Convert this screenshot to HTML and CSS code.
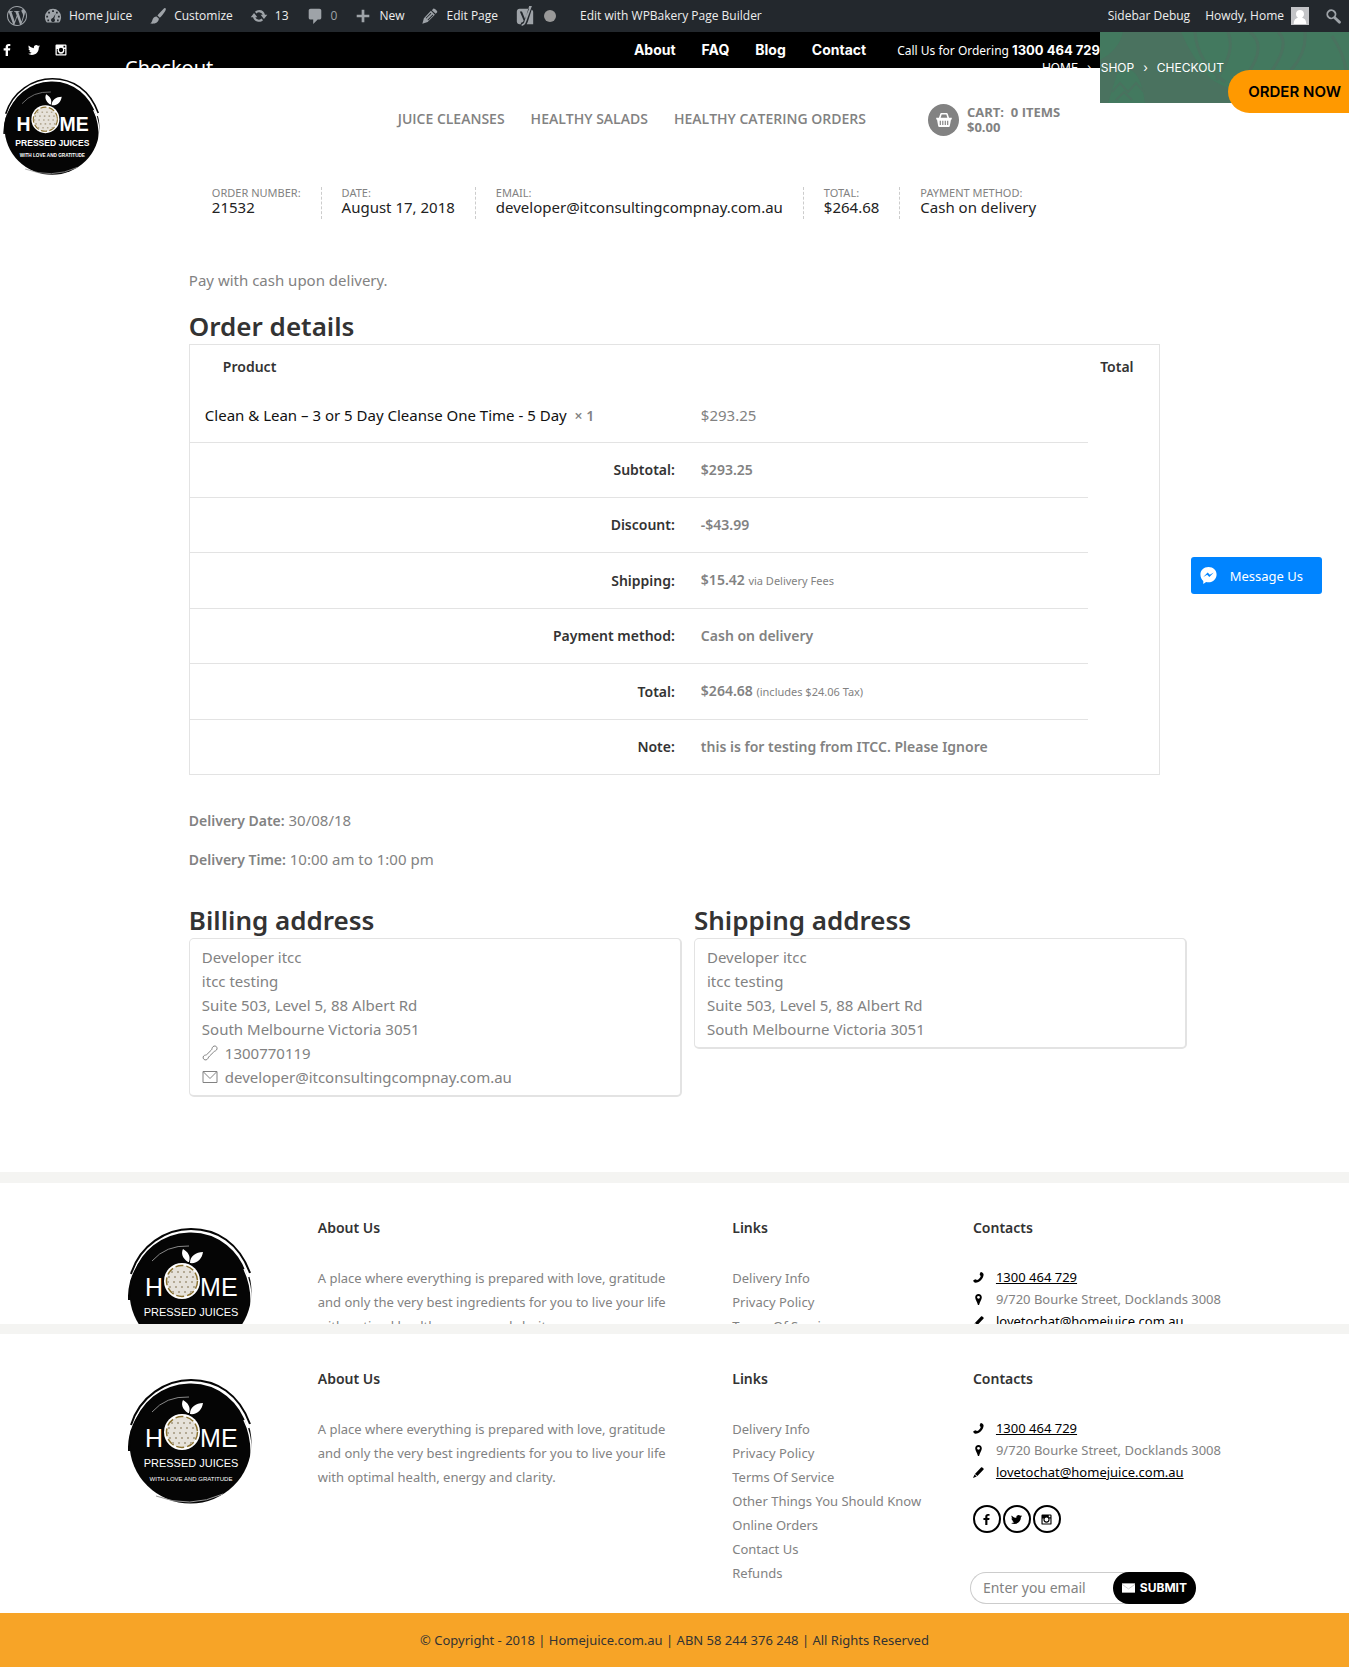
FILE: index.html
```html
<!DOCTYPE html>
<html lang="en">
<head>
<meta charset="utf-8">
<title>Checkout – Home Juice</title>
<link rel="stylesheet" href="styles.css">
</head>
<body>
<svg class="sprite" aria-hidden="true">
  <symbol id="i-wp" viewBox="0 0 24 24"><path d="M21.469 6.825c.84 1.537 1.318 3.3 1.318 5.175 0 3.979-2.156 7.456-5.363 9.325l3.295-9.527c.615-1.54.82-2.771.82-3.864 0-.405-.026-.78-.07-1.11m-7.981.105c.647-.03 1.232-.105 1.232-.105.582-.075.514-.93-.067-.899 0 0-1.755.135-2.88.135-1.064 0-2.85-.15-2.85-.15-.585-.03-.661.855-.075.885 0 0 .54.061 1.125.09l1.68 4.605-2.37 7.08L5.354 6.9c.649-.03 1.234-.1 1.234-.1.585-.075.516-.93-.065-.896 0 0-1.746.138-2.874.138-.2 0-.438-.008-.69-.015C4.911 3.15 8.235 1.215 12 1.215c2.809 0 5.365 1.072 7.286 2.833-.046-.003-.091-.009-.141-.009-1.06 0-1.812.923-1.812 1.914 0 .89.513 1.643 1.06 2.531.411.72.89 1.643.89 2.977 0 .915-.354 1.994-.821 3.479l-1.075 3.585-3.9-11.61.001.014zM12 22.784c-1.059 0-2.081-.153-3.048-.437l3.237-9.406 3.315 9.087c.024.053.05.101.078.149-1.12.393-2.325.609-3.582.609M1.211 12c0-1.564.336-3.05.935-4.39L7.29 21.709C3.694 19.96 1.212 16.271 1.211 12M12 0C5.385 0 0 5.385 0 12s5.385 12 12 12 12-5.385 12-12S18.615 0 12 0"/></symbol>
  <symbol id="i-dash" viewBox="0 0 20 20"><path fill-rule="evenodd" d="M10 2a9 9 0 0 0-9 9c0 2.500.8 4.600 2.200 6.200h13.600C18.200 15.600 19 13.500 19 11a9 9 0 0 0-9-9zM9 3.500h2v2H9zM4.600 5.300h2v2h-2zM13.300 5.300h2v2h-2zM2.500 9.800h2v2h-2zM15.500 9.800h2v2h-2zM12.900 7.600l-1.500 5.200a2.200 2.200 0 1 1-1.500-.5zM3.800 14h1.800v1.800H3.800zM14.500 14h1.800v1.800h-1.800z"/></symbol>
  <symbol id="i-brush" viewBox="0 0 20 20"><path d="M18.300 1.300c1 .9.200 2.400-.8 3.900-1.700 2.400-4 5.500-5.500 6.700l-2.600-2.400C10.700 7.600 14.300 3.700 16 2.100c.8-.8 1.700-1.300 2.300-.8zM8.400 10.600l2.500 2.300c.2 1.400-.5 3.200-2.200 4.300-2 1.300-4.800 1.500-7.300 1.100 1.500-1 1.800-1.900 2.300-3.600.6-2.300 2.300-4.100 4.700-4.100z"/></symbol>
  <symbol id="i-update" viewBox="0 0 20 20"><path d="M10.200 3.300a6.700 6.700 0 0 1 6.400 5.300h2.600l-3.700 4.600-3.700-4.600h2.300a4.300 4.300 0 0 0-7-1.500L5.500 5.300a6.700 6.700 0 0 1 4.700-2zM4.500 6.800l3.700 4.600H5.900a4.300 4.300 0 0 0 7 1.500l1.600 1.800A6.700 6.700 0 0 1 3.400 11.400H.8z"/></symbol>
  <symbol id="i-comment" viewBox="0 0 20 20"><path d="M5 2h10c1.100 0 2 .9 2 2v8c0 1.100-.9 2-2 2h-2l-5 5v-5H5c-1.100 0-2-.9-2-2V4c0-1.100.9-2 2-2z"/></symbol>
  <symbol id="i-plus" viewBox="0 0 20 20"><path d="M17 8.500v3h-5.500V17h-3v-5.500H3v-3h5.500V3h3v5.500z"/></symbol>
  <symbol id="i-pen" viewBox="0 0 20 20"><path fill-rule="evenodd" d="M13.900 1.700c.9-.9 5 3 4.100 4l-1.700 1.700-4.200-3.900zM11 4.300l4.400 4.300-8 8.200L1.500 18.500l1.700-6zM10.800 6.400l-5.600 5.900.6.600 5.700-5.800zM12.900 8.400l-5.700 5.800.7.700 5.800-5.700z"/></symbol>
  <symbol id="i-yoast" viewBox="0 0 20 22"><path fill-rule="evenodd" d="M4 3h10.500L9.900 13.900 6.700 6H4.300l4.200 10c-.5 1.500-1.200 2.200-3 2.300V20H4c-1.700 0-3-1.300-3-3V6c0-1.700 1.300-3 3-3zM14.600 0h3l-6.300 17c-1.200 3.200-2.700 4.700-5 4.900v-1.900c2-.5 2.700-1.600 3.100-3zM17.300 4c1.100.4 1.700 1.400 1.700 2.500V20h-7.200c.6-1.100 1.100-2.200 1.500-3.300z"/></symbol>
  <symbol id="i-search" viewBox="0 0 20 20"><path fill-rule="evenodd" d="M12.100 4.200a5.500 5.500 0 0 0-7.900 7.700 5.500 5.500 0 0 0 6.400 1l5.200 5c.8.8 1.900.8 2.500.1.700-.7.600-1.700-.1-2.400l-5.200-4.900a5.500 5.500 0 0 0-.9-6.500zM10.700 5.700a3.500 3.500 0 1 1-5 4.900 3.500 3.500 0 0 1 5-4.900z"/></symbol>
  <symbol id="i-fb" viewBox="0 0 24 24"><path d="M14 24V13h4l.6-4.500H14V6c0-1.300.4-2.200 2.200-2.200h2.400V.2C18.200.1 16.800 0 15.200 0 11.700 0 9.300 2.100 9.300 6v2.500h-4V13h4v11z"/></symbol>
  <symbol id="i-tw" viewBox="0 0 24 24"><path d="M23.954 4.569c-.885.389-1.83.654-2.825.775 1.014-.611 1.794-1.574 2.163-2.723-.951.555-2.005.959-3.127 1.184-.896-.959-2.173-1.559-3.591-1.559-2.717 0-4.92 2.203-4.92 4.917 0 .39.045.765.127 1.124C7.691 8.094 4.066 6.13 1.64 3.161c-.427.722-.666 1.561-.666 2.475 0 1.71.87 3.213 2.188 4.096-.807-.026-1.566-.248-2.228-.616v.061c0 2.385 1.693 4.374 3.946 4.827-.413.111-.849.171-1.296.171-.314 0-.615-.03-.916-.086.631 1.953 2.445 3.377 4.604 3.417-1.68 1.319-3.809 2.105-6.102 2.105-.39 0-.779-.023-1.17-.067 2.189 1.394 4.768 2.209 7.557 2.209 9.054 0 13.999-7.496 13.999-13.986 0-.209 0-.42-.015-.63.961-.689 1.8-1.56 2.46-2.548z"/></symbol>
  <symbol id="i-ig" viewBox="0 0 24 24"><path fill-rule="evenodd" d="M3 1h18a2 2 0 0 1 2 2v18a2 2 0 0 1-2 2H3a2 2 0 0 1-2-2V3a2 2 0 0 1 2-2zM3.500 10v10.500h17V10h-2.200a6.800 6.800 0 1 1-12.600 0zM12 7.700a4.300 4.300 0 1 0 0 8.600 4.300 4.300 0 0 0 0-8.600zM17 3.500V7h3.500V3.500z"/></symbol>
  <symbol id="i-basket" viewBox="0 0 20 18"><path fill-rule="evenodd" d="M5 1.500C5.300.6 5.900 0 7 0h6c1.100 0 1.700.6 2 1.500L16.500 6H20v2.500h-1L17.600 16c-.2 1.200-.9 2-2 2H4.400c-1.100 0-1.800-.8-2-2L1 8.500H0V6h3.500zM7 2L5.700 6h8.600L13 2zM4.500 10v5.500H6V10zM7.700 10v5.500h1.500V10zM10.900 10v5.500h1.500V10zM14 10v5.500h1.500V10z"/></symbol>
  <symbol id="i-tel" viewBox="0 0 20 20"><path d="M14 0c3 .5 5.500 2.500 5.300 5C18.500 12.500 12 19 4.500 19.500 2.500 19.500.5 17.500.3 15.500L4 13l3.500 1.500c3-1.500 5.500-4 6.500-7L12 4z"/></symbol>
  <symbol id="i-pin" viewBox="0 0 20 20"><path fill-rule="evenodd" d="M10 0c3.700 0 6 2.600 6 6.200 0 4-3.500 7.300-5 13.800H9C7.500 13.500 4 10.200 4 6.200 4 2.600 6.300 0 10 0zm0 3.500a2.600 2.600 0 1 0 0 5.200 2.600 2.600 0 0 0 0-5.200z"/></symbol>
  <symbol id="i-pencil" viewBox="0 0 20 20"><path d="M15 .5c1.200-1.200 5.500 2.300 4.300 4L8 16.500 3.500 12.500zM2.800 13.500l4 3.700L0 20z"/></symbol>
  <symbol id="logo" viewBox="0 0 125 126">
    <ellipse cx="62.500" cy="64" rx="61" ry="60.500" fill="#050505"/>
    <path d="M3 50C10 22 33 4 61 3c30-1 53 20 60 46" fill="none" stroke="#fff" stroke-width="3"/>
    <path d="M3 46C12 17 38 1 63 1c26 0 48 14 59 44M1 72C0 40 25 9 62 6" fill="none" stroke="#050505" stroke-width="2"/>
    <path d="M116 41c6 12 8 24 7 39" fill="none" stroke="#fff" stroke-width="1.500"/>
    <path d="M24 33Q38 17 61 18" fill="none" stroke="#888" stroke-width="1"/>
    <path d="M28 117q34 13 67-2" fill="none" stroke="#999" stroke-width="1"/>
    <path d="M60 34c-6-4-7-9-5-13 5 3 8 7 6 13zM62 35c0-7 6-11 13-11-1 7-6 12-13 11z" fill="#fff"/>
    <circle cx="54" cy="53" r="18" fill="#fff"/>
    <circle cx="54" cy="53" r="15.500" fill="#e6e2da" stroke="#8b7230" stroke-width="1.500" stroke-dasharray="8 3"/>
    <g fill="none" stroke="#b3a994" stroke-width="2" stroke-dasharray="2 4">
      <path d="M43 44h24M40 49h29M39 54h30M41 59h28M44 64h22"/>
    </g>
    <g fill="#fff" font-family="'Liberation Sans', sans-serif">
      <text x="17" y="68" font-size="25">H</text>
      <text x="72" y="68" font-size="25">M</text>
      <text x="93" y="68" font-size="25">E</text>
      <text x="63" y="88" font-size="11" text-anchor="middle">PRESSED JUICES</text>
      <text x="63" y="102" font-size="6" text-anchor="middle">WITH LOVE AND GRATITUDE</text>
    </g>
  </symbol>
</svg>

<nav class="adminbar" aria-label="Toolbar">
  <a class="ab-item ab-logo" href="#" aria-label="About WordPress"><svg class="ic20"><use href="#i-wp"/></svg></a>
  <a class="ab-item" href="#"><svg class="ic18"><use href="#i-dash"/></svg>Home Juice</a>
  <a class="ab-item" href="#"><svg class="ic18"><use href="#i-brush"/></svg>Customize</a>
  <a class="ab-item" href="#"><svg class="ic18"><use href="#i-update"/></svg>13</a>
  <a class="ab-item ab-dim" href="#"><svg class="ic18"><use href="#i-comment"/></svg>0</a>
  <a class="ab-item" href="#"><svg class="ic18"><use href="#i-plus"/></svg>New</a>
  <a class="ab-item" href="#"><svg class="ic18"><use href="#i-pen"/></svg>Edit Page</a>
  <a class="ab-item ab-seo" href="#" aria-label="SEO"><svg class="ic20"><use href="#i-yoast"/></svg><span class="dot"></span></a>
  <a class="ab-item" href="#">Edit with WPBakery Page Builder</a>
  <div class="ab-right">
    <a class="ab-item" href="#">Sidebar Debug</a>
    <a class="ab-item" href="#">Howdy, Home<svg class="avatar" viewBox="0 0 18 18"><path fill="#c3c4c7" d="M0 0h18v18H0z"/><path fill="#fff" d="M9 3c2.200 0 4 1.600 4 4 0 1.800-.8 3-2 3.700 2.600.6 4.200 2.300 4.300 6.300H2.700c.1-4 1.700-5.700 4.300-6.300C5.800 10 5 8.800 5 7c0-2.400 1.800-4 4-4z"/></svg></a>
    <a class="ab-item" href="#" aria-label="Search"><svg class="ic18"><use href="#i-search"/></svg></a>
  </div>
</nav>

<header class="masthead">
  <svg class="banner" viewBox="0 0 249 71" preserveAspectRatio="xMaxYMin slice" aria-hidden="true">
    <path fill="#4a725f" d="M0 0h249v71H0z"/>
    <g fill="#43795f"><path d="M0 0h23q-4 18-23 28zM81 0h168v71h-68q-50-10-70-24Q92 26 81 0zM17 42q22-16 28 29H8z"/></g>
    <g fill="none" stroke="#4a725f" stroke-width="3">
      <path d="M95 0q2 30 30 50M128 0q8 20-12 48M150 0q18 14-4 44M178 0q14 12-10 44M205 0q2 20-14 38M232 4q12 18 14 34"/></g>
    <path fill="none" stroke="#4a725f" stroke-width="2" d="M12 60l8-9 8 9 8-9 8 9M16 68l8-8 8 8"/>
  </svg>
  <div class="topbar">
    <div class="topbar-social">
      <a href="#" aria-label="Facebook"><svg><use href="#i-fb"/></svg></a>
      <a href="#" aria-label="Twitter"><svg><use href="#i-tw"/></svg></a>
      <a href="#" aria-label="Instagram"><svg><use href="#i-ig"/></svg></a>
    </div>
    <nav class="topbar-links"><a href="#">About</a><a href="#">FAQ</a><a href="#">Blog</a><a href="#">Contact</a></nav>
    <div class="topbar-call">Call Us for Ordering <strong>1300 464 729</strong></div>
  </div>
  <div class="page-head">
    <h1>Checkout</h1>
    <nav class="crumbs"><a href="#">HOME</a><span>›</span><a href="#">SHOP</a><span>›</span><span>CHECKOUT</span></nav>
  </div>
  <div class="mainbar">
    <a class="brand" href="#" aria-label="Home Pressed Juices"><svg><use href="#logo"/></svg></a>
    <nav class="menu"><a href="#">JUICE CLEANSES</a><a href="#">HEALTHY SALADS</a><a href="#">HEALTHY CATERING ORDERS</a></nav>
    <a class="cart" href="#">
      <span class="cart-icon"><svg><use href="#i-basket"/></svg></span>
      <span>CART:&nbsp; 0 ITEMS<br>$0.00</span>
    </a>
  </div>
</header>

<a class="order-now" href="#">ORDER NOW</a>
<button class="message-us" type="button"><svg viewBox="0 0 20 20"><path fill="#fff" d="M10 1c5 0 8.500 3.500 8.500 8s-3.500 8.200-8.500 8.200c-.9 0-1.700-.1-2.500-.3L4.500 19v-3.300C2.700 14.200 1.500 11.800 1.500 9 1.500 4.500 5 1 10 1z"/><path fill="#0084ff" d="M4.500 11.500l4.600-4.700 2.300 2.300 4.100-2.300-4.600 4.800-2.300-2.400z"/></svg>Message Us</button>

<main class="content">
  <ul class="overview">
    <li>ORDER NUMBER:<strong>21532</strong></li>
    <li>DATE:<strong>August 17, 2018</strong></li>
    <li>EMAIL:<strong>developer@itconsultingcompnay.com.au</strong></li>
    <li>TOTAL:<strong>$264.68</strong></li>
    <li>PAYMENT METHOD:<strong>Cash on delivery</strong></li>
  </ul>
  <p class="pay-note">Pay with cash upon delivery.</p>

  <section>
    <h2>Order details</h2>
    <table class="order">
      <colgroup><col class="col-name"><col><col class="col-side"></colgroup>
      <thead><tr><th colspan="2" class="th-product">Product</th><th>Total</th></tr></thead>
      <tbody>
        <tr class="line-item"><td><a href="#">Clean &amp; Lean – 3 or 5 Day Cleanse One Time - 5 Day</a>&nbsp; <strong>× 1</strong></td><td>$293.25</td></tr>
      </tbody>
      <tfoot>
        <tr><th scope="row">Subtotal:</th><td>$293.25</td></tr>
        <tr><th scope="row">Discount:</th><td>-$43.99</td></tr>
        <tr><th scope="row">Shipping:</th><td>$15.42 <small>via Delivery Fees</small></td></tr>
        <tr><th scope="row">Payment method:</th><td>Cash on delivery</td></tr>
        <tr><th scope="row">Total:</th><td>$264.68 <small>(includes $24.06 Tax)</small></td></tr>
        <tr><th scope="row">Note:</th><td>this is for testing from ITCC. Please Ignore</td></tr>
      </tfoot>
    </table>
  </section>

  <p class="delivery"><strong>Delivery Date:</strong> 30/08/18</p>
  <p class="delivery"><strong>Delivery Time:</strong> 10:00 am to 1:00 pm</p>

  <section class="addresses">
    <div>
      <h2>Billing address</h2>
      <address>Developer itcc<br>itcc testing<br>Suite 503, Level 5, 88 Albert Rd<br>South Melbourne Victoria 3051
        <span class="addr-line"><svg viewBox="0 0 16 16"><path d="M10.200 2.800C11 1 13 .4 14.300 1.600c1.300 1.300.9 3.400-.8 4.200-1 .5-1.500.7-2.200 1.600L7.600 11c-.9.800-1.200 1.300-1.600 2.300-.8 1.700-2.900 2.200-4.200.9-1.300-1.300-.7-3.300.8-3.900.9-.4 1.300 0 2.200-.8L9.400 5c.8-.8.4-1.300.8-2.200z"/></svg>1300770119</span>
        <span class="addr-line"><svg viewBox="0 0 16 16"><path d="M1 2.500h14v11H1zM1.500 3L8 9.500 14.500 3"/></svg>developer@itconsultingcompnay.com.au</span>
      </address>
    </div>
    <div>
      <h2>Shipping address</h2>
      <address>Developer itcc<br>itcc testing<br>Suite 503, Level 5, 88 Albert Rd<br>South Melbourne Victoria 3051</address>
    </div>
  </section>
</main>

<footer class="footer footer-peek">
  <div class="footer-logo"><svg><use href="#logo"/></svg></div>
  <section><h3>About Us</h3><p>A place where everything is prepared with love, gratitude and only the very best ingredients for you to live your life with optimal health, energy and clarity.</p></section>
  <section><h3>Links</h3><ul><li><a href="#">Delivery Info</a></li><li><a href="#">Privacy Policy</a></li><li><a href="#">Terms Of Service</a></li></ul></section>
  <section><h3>Contacts</h3>
    <ul class="contacts">
      <li><svg><use href="#i-tel"/></svg><a href="#">1300 464 729</a></li>
      <li><svg><use href="#i-pin"/></svg>9/720 Bourke Street, Docklands 3008</li>
      <li><svg><use href="#i-pencil"/></svg><a href="#">lovetochat@homejuice.com.au</a></li>
    </ul>
  </section>
</footer>

<footer class="footer">
  <div class="footer-logo"><svg><use href="#logo"/></svg></div>
  <section><h3>About Us</h3><p>A place where everything is prepared with love, gratitude and only the very best ingredients for you to live your life with optimal health, energy and clarity.</p></section>
  <section><h3>Links</h3>
    <ul>
      <li><a href="#">Delivery Info</a></li><li><a href="#">Privacy Policy</a></li><li><a href="#">Terms Of Service</a></li>
      <li><a href="#">Other Things You Should Know</a></li><li><a href="#">Online Orders</a></li><li><a href="#">Contact Us</a></li><li><a href="#">Refunds</a></li>
    </ul>
  </section>
  <section><h3>Contacts</h3>
    <ul class="contacts">
      <li><svg><use href="#i-tel"/></svg><a href="#">1300 464 729</a></li>
      <li><svg><use href="#i-pin"/></svg>9/720 Bourke Street, Docklands 3008</li>
      <li><svg><use href="#i-pencil"/></svg><a href="#">lovetochat@homejuice.com.au</a></li>
    </ul>
    <div class="social">
      <a href="#" aria-label="Facebook"><svg><use href="#i-fb"/></svg></a>
      <a href="#" aria-label="Twitter"><svg><use href="#i-tw"/></svg></a>
      <a href="#" aria-label="Instagram"><svg><use href="#i-ig"/></svg></a>
    </div>
    <form class="signup">
      <input type="email" placeholder="Enter you email" aria-label="Email">
      <button type="button"><svg viewBox="0 0 14 10"><path fill="#fff" d="M0 0h14v10H0z"/><path fill="none" stroke="#ccc" d="M0 1l7 5 7-5"/></svg>SUBMIT</button>
    </form>
  </section>
</footer>

<div class="copyright">© Copyright - 2018 | Homejuice.com.au | ABN 58 244 376 248 | All Rights Reserved</div>
</body>
</html>
```
FILE: styles.css
```css
* { box-sizing: border-box; }
body { margin: 0; background: #fff; color: #828282; font: 15px/24px "Noto Sans", sans-serif; }
a { color: inherit; text-decoration: none; }
h1, h2, h3, p, ul { margin: 0; padding: 0; }
ul { list-style: none; }
strong { font-size: 14px; line-height: 14px; font-weight: 600; }
svg { display: block; fill: currentColor; flex: none; }
.sprite { display: none; }

/* Admin toolbar */
.adminbar { display: flex; height: 32px; align-items: center; background: #23282d; color: #eee; font: 12px/32px "Open Sans", sans-serif; padding: 0 7px; white-space: nowrap; }
.ab-item { display: flex; align-items: center; gap: 7px; margin-right: 17px; }
.ab-item svg { color: #9ea3a8; }
.ab-dim { color: #9ea3a8; }
.ab-seo { gap: 9px; margin-right: 24px; }
.ab-seo .dot { width: 12px; height: 12px; border-radius: 50%; background: #999; }
.ab-right { display: flex; margin-left: auto; }
.ab-right .ab-item { margin-right: 15px; }
.ab-right .ab-item:last-child { margin-right: 0; }
.ic20 { width: 20px; height: 20px; }
.ic18 { width: 18px; height: 18px; }
.avatar { width: 18px; height: 18px; }

/* Site header: banner, black strip, page title and white bar share one grid */
.masthead { display: grid; grid-template: 36px 35px 84px / minmax(0, 1100px) minmax(0, 1fr); }
.banner { grid-area: 1 / 2 / 3 / 3; width: 100%; height: 100%; }
.topbar { grid-area: 1 / 1; display: flex; align-items: center; background: #000; color: #fff; white-space: nowrap; }
.topbar-social { display: flex; gap: 15px; padding-left: 1px; }
.topbar-social svg { width: 12px; height: 12px; }
.topbar-links { display: flex; gap: 26px; margin-left: auto; font: bold 14px/36px Inter, sans-serif; }
.topbar-call { margin-left: 31px; font-size: 12px; }
.topbar-call strong { font: bold 13px/24px Inter, sans-serif; }
.page-head { grid-area: 1 / 1 / 3 / 3; z-index: 1; display: flex; justify-content: space-between; align-items: center; padding: 0 125px; color: #fff; }
.page-head h1 { font-size: 20px; font-weight: 400; }
.crumbs { display: flex; gap: 9px; font: 12px/20px Inter, sans-serif; }
.mainbar { grid-area: 2 / 1 / 4 / 2; z-index: 2; display: flex; align-items: flex-start; background: #fff; padding-left: 3px; font: 600 14px/15px "Open Sans", sans-serif; white-space: nowrap; }
.brand svg { width: 98px; height: 98px; margin-top: 10px; }
.menu { display: flex; gap: 26px; margin: 43px 0 0 auto; }
.cart { display: flex; flex: 0 0 136px; align-items: center; gap: 8px; margin: 36px 36px 0 62px; font-size: 13px; font-weight: 700; }
.cart-icon { display: grid; flex: none; place-items: center; width: 31px; height: 32px; border-radius: 50%; background: #828282; color: #fff; }
.cart-icon svg { width: 16px; height: 14px; }

.order-now { position: fixed; right: 0; top: 70px; z-index: 3; padding: 0 8px 0 20px; border-radius: 22px 0 0 22px; background: #ff9900; color: #000; font: 600 15px/43px Inter, sans-serif; }
.message-us { position: fixed; right: 27px; top: 557px; z-index: 3; display: flex; align-items: center; gap: 12px; height: 37px; padding: 0 19px 0 8px; border: 0; border-radius: 3px; background: #0084ff; color: #fff; font: 13px/24px "Noto Sans", sans-serif; }
.message-us svg { width: 19px; height: 19px; }

/* Order */
.content { padding: 0 12% 75px 14%; }
.overview { display: flex; padding-left: 23px; }
.overview li { height: 32px; padding-right: 20px; margin-right: 20px; border-right: 1px dashed #ccc; font-size: 11px; line-height: 11px; white-space: nowrap; }
.overview li:last-child { border: 0; margin: 0; }
.overview strong { display: block; color: #222; font-size: 15px; line-height: 18px; font-weight: 400; }
.pay-note { margin: 49px 0 16px; }
h2 { color: #333; font-size: 26px; line-height: 36px; font-weight: 600; }
.order { width: calc(100% - 27px); margin-bottom: 33px; border: 1px solid #e3e3e3; border-collapse: separate; border-spacing: 0; table-layout: fixed; text-align: left; }
.col-name { width: 496px; }
.col-side { width: 71px; }
.order th { color: #333; font-size: 14px; font-weight: 600; }
.order thead th { padding: 10px 12px 9px; }
.order thead .th-product { padding-left: 33px; }
.order td, .order tfoot th { padding: 15px; border-top: 1px solid #e3e3e3; }
.order tfoot th { text-align: right; padding-right: 11px; }
.order tfoot td { font-size: 14px; font-weight: 600; }
.order .line-item td { border: 0; }
.order .line-item a { color: #111; }
.order small { font-size: 11px; font-weight: 400; }
.delivery { margin-bottom: 15px; }
.addresses { display: grid; grid-template-columns: 1fr 1fr; gap: 12px; margin-top: 31px; align-items: start; }
address { padding: 6px 12px; border: 1px solid #e3e3e3; border-width: 1px 2px 2px 1px; border-radius: 5px; font-style: normal; }
.addr-line { display: flex; align-items: center; gap: 7px; }
.addr-line svg { width: 16px; height: 16px; fill: none; stroke: currentColor; }

/* Footer */
.footer { display: grid; grid-template-columns: 190fr 415fr 241fr 247fr; padding: 33px 128px 0; border-top: 10px solid #f4f4f2; font-size: 13px; min-height: 289px; }
.footer-peek { height: 152px; min-height: 0; overflow: hidden; border-top-width: 11px; }
.footer-logo svg { width: 125px; height: 126px; margin-top: 12px; }
.footer h3 { color: #333; font-size: 14px; font-weight: 600; margin-bottom: 26px; }
.footer p { max-width: 360px; }
.footer li { white-space: nowrap; }
.contacts li { display: flex; align-items: center; gap: 12px; line-height: 22px; }
.contacts svg { width: 11px; height: 11px; color: #000; }
.contacts a { color: #000; text-decoration: underline; }
.social { display: flex; gap: 2px; margin-top: 22px; }
.social a { display: grid; place-items: center; width: 28px; height: 28px; border: 2px solid #000; border-radius: 50%; color: #000; }
.social svg { width: 11px; height: 11px; }
.signup { display: flex; width: 226px; margin: 39px 0 9px -3px; border: 1px solid #ccc; border-right: 0; border-radius: 16px; }
.signup input { flex: 1; min-width: 0; border: 0; padding: 0 12px; background: none; color: #828282; font: 14px/30px "Noto Sans", sans-serif; }
.signup input::placeholder { color: #828282; opacity: 1; }
.signup button { display: flex; align-items: center; gap: 5px; height: 32px; margin: -1px 0; padding: 0 9px; border: 0; border-radius: 16px; background: #000; color: #fff; font: bold 12px/32px Inter, sans-serif; }
.signup button svg { width: 13px; height: 10px; }
.copyright { background: #f7a427; color: #333; font-size: 13px; line-height: 54px; text-align: center; }
```
